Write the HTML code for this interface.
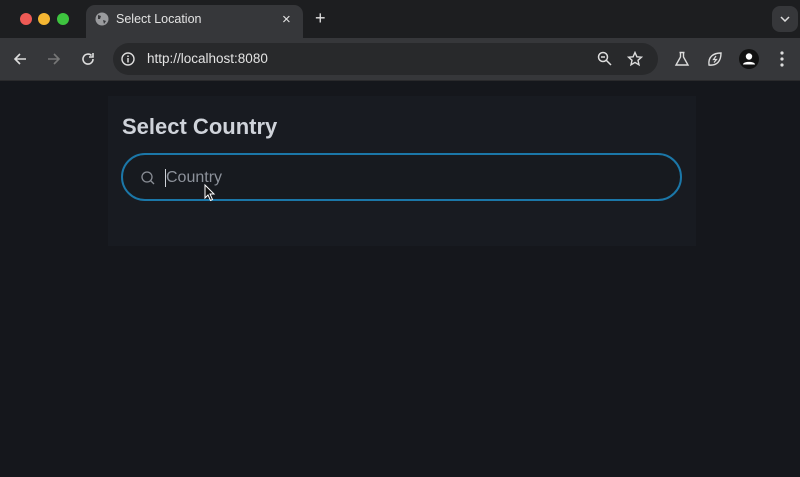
<!DOCTYPE html>
<html><head><style>
*{margin:0;padding:0;box-sizing:border-box}
body{width:800px;height:477px;overflow:hidden;background:#15171c;font-family:"Liberation Sans",sans-serif;position:relative}
.tabbar{position:absolute;left:0;top:0;width:800px;height:38px;background:#1d1e20}
.dot{position:absolute;top:13px;width:12px;height:12px;border-radius:50%}
.tab{position:absolute;left:86px;top:5px;width:217px;height:33px;background:#36373a;border-radius:9px 9px 0 0}
.toolbar{position:absolute;left:0;top:38px;width:800px;height:43px;background:#36373a;border-bottom:1px solid #2a2a2c}
.omni{position:absolute;left:113px;top:5px;width:545px;height:32px;border-radius:16px;background:#28292b}
.t{position:absolute;color:#e3e3e3;font-size:13px}
.card{position:absolute;left:108px;top:96px;width:588px;height:150px;background:#181b21}
.input{position:absolute;left:121px;top:153px;width:561px;height:48px;border:2px solid #1b77a8;border-radius:24px;background:#171a1f}
</style></head><body>
<div class="tabbar">
<div class="dot" style="left:20px;background:#ee5a55"></div>
<div class="dot" style="left:38px;background:#f4b632"></div>
<div class="dot" style="left:57px;background:#3ec43f"></div>
<div class="tab">
<svg style="position:absolute;left:9px;top:7px" width="14" height="14" viewBox="0 0 14 14"><circle cx="7" cy="7" r="6.5" fill="#9a9b9e"/><path d="M3 3 L6 4 L5 7 L3 7 Z M8 8 L11 9 L9 12 Z" fill="#36373a"/></svg>
<span class="t" style="left:30px;top:7px;font-size:12.5px">Select Location</span>
<span class="t" style="left:196px;top:6px;font-size:15px">×</span>
</div>
<span class="t" style="left:315px;top:9px;font-size:18px;line-height:18px">+</span>
<div style="position:absolute;left:772px;top:6px;width:26px;height:26px;border-radius:8px;background:#36373a"><svg style="position:absolute;left:8px;top:10px" width="10" height="6"><path d="M1 1 L5 5 L9 1" stroke="#ddd" stroke-width="1.5" fill="none"/></svg></div>
</div>
<div class="toolbar">
<svg style="position:absolute;left:13px;top:14px" width="14" height="14"><path d="M13 7H2M7 2L2 7L7 12" stroke="#ddd" stroke-width="1.6" fill="none"/></svg>
<svg style="position:absolute;left:47px;top:14px" width="14" height="14"><path d="M1 7H12M7 2L12 7L7 12" stroke="#777" stroke-width="1.6" fill="none"/></svg>
<svg style="position:absolute;left:81px;top:14px" width="14" height="14"><path d="M12 7A5 5 0 1 1 10.5 3.5M12 1V5H8" stroke="#ddd" stroke-width="1.6" fill="none"/></svg>
<div class="omni">
<svg style="position:absolute;left:8px;top:9px" width="14" height="14"><circle cx="7" cy="7" r="6" stroke="#ddd" stroke-width="1.4" fill="none"/><path d="M7 6V10.5M7 3.5V5" stroke="#ddd" stroke-width="1.5"/></svg>
<span class="t" style="left:34px;top:8px;font-size:13.5px">http://localhost:8080</span>
<svg style="position:absolute;left:484px;top:8px" width="16" height="16"><circle cx="6" cy="6" r="4.5" stroke="#ddd" stroke-width="1.5" fill="none"/><path d="M9.5 9.5L14 14M4 6H8" stroke="#ddd" stroke-width="1.5"/></svg>
<svg style="position:absolute;left:514px;top:8px" width="16" height="16"><path d="M8 1.5L9.9 5.8L14.5 6.2L11 9.3L12 13.8L8 11.4L4 13.8L5 9.3L1.5 6.2L6.1 5.8Z" stroke="#ddd" stroke-width="1.4" fill="none"/></svg>
</div>
<svg style="position:absolute;left:674px;top:13px" width="16" height="16"><path d="M5.5 1.5H10.5M6.5 1.5V6L2 14H14L9.5 6V1.5" stroke="#ddd" stroke-width="1.4" fill="none"/></svg>
<svg style="position:absolute;left:707px;top:13px" width="16" height="16"><path d="M2 14C1 6 6 2 14 2C14 10 10 15 2 14Z" stroke="#ddd" stroke-width="1.4" fill="none"/><path d="M9 5L6.5 8.5H9.5L7 11.5" stroke="#ddd" stroke-width="1.2" fill="none"/></svg>
<div style="position:absolute;left:739px;top:11px;width:20px;height:20px;border-radius:50%;background:#111"><svg width="20" height="20"><circle cx="10" cy="7.5" r="3.2" fill="#fff"/><path d="M4 15.5C4 12 16 12 16 15.5Z" fill="#fff"/></svg></div>
<svg style="position:absolute;left:780px;top:13px" width="4" height="16"><circle cx="2" cy="2" r="1.6" fill="#ddd"/><circle cx="2" cy="8" r="1.6" fill="#ddd"/><circle cx="2" cy="14" r="1.6" fill="#ddd"/></svg>
</div>
<div class="card"></div>
<div style="position:absolute;left:122px;top:114px;font-size:22px;font-weight:bold;color:#cfd3da">Select Country</div>
<div class="input">
<svg style="position:absolute;left:17px;top:15px" width="16" height="16"><circle cx="7" cy="7" r="5" stroke="#8a8e96" stroke-width="1.3" fill="none"/><path d="M10.5 10.5L14 14" stroke="#8a8e96" stroke-width="1.3"/></svg>
<div style="position:absolute;left:42px;top:14px;width:1px;height:18px;background:#cfd3da"></div>
<span style="position:absolute;left:43px;top:14px;font-size:16px;color:#8d929b">Country</span>
</div>
<svg style="position:absolute;left:204px;top:184px" width="12" height="18"><path d="M1 1V14L4 11L6.5 16.5L8.5 15.5L6 10H10Z" fill="#111" stroke="#fff" stroke-width="1"/></svg>
</body></html>
